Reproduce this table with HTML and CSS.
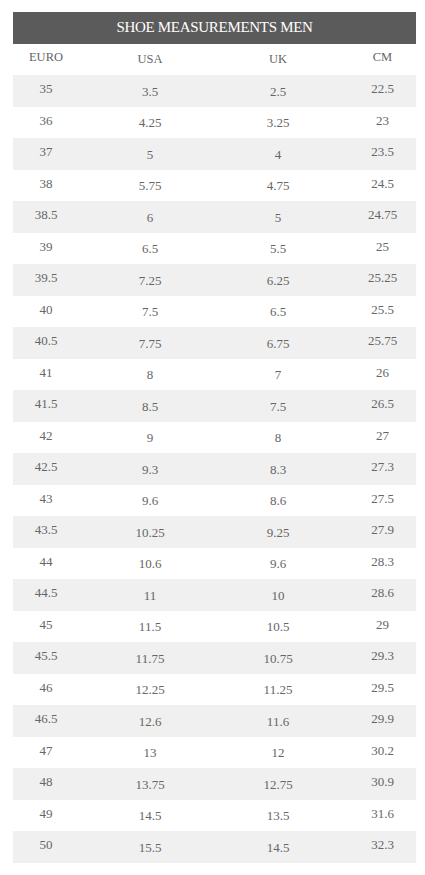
FILE: index.html
```html
<!DOCTYPE html>
<html>
<head>
<meta charset="utf-8">
<link rel="stylesheet" href="styles.css">
</head>
<body>
<div class="table">
  <div class="title">SHOE MEASUREMENTS MEN</div>
  <div class="row head"><span class="c1">EURO</span><span class="c2">USA</span><span class="c3">UK</span><span class="c4">CM</span></div>
  <div class="row alt"><span class="c1">35</span><span class="c2">3.5</span><span class="c3">2.5</span><span class="c4">22.5</span></div>
  <div class="row"><span class="c1">36</span><span class="c2">4.25</span><span class="c3">3.25</span><span class="c4">23</span></div>
  <div class="row alt"><span class="c1">37</span><span class="c2">5</span><span class="c3">4</span><span class="c4">23.5</span></div>
  <div class="row"><span class="c1">38</span><span class="c2">5.75</span><span class="c3">4.75</span><span class="c4">24.5</span></div>
  <div class="row alt"><span class="c1">38.5</span><span class="c2">6</span><span class="c3">5</span><span class="c4">24.75</span></div>
  <div class="row"><span class="c1">39</span><span class="c2">6.5</span><span class="c3">5.5</span><span class="c4">25</span></div>
  <div class="row alt"><span class="c1">39.5</span><span class="c2">7.25</span><span class="c3">6.25</span><span class="c4">25.25</span></div>
  <div class="row"><span class="c1">40</span><span class="c2">7.5</span><span class="c3">6.5</span><span class="c4">25.5</span></div>
  <div class="row alt"><span class="c1">40.5</span><span class="c2">7.75</span><span class="c3">6.75</span><span class="c4">25.75</span></div>
  <div class="row"><span class="c1">41</span><span class="c2">8</span><span class="c3">7</span><span class="c4">26</span></div>
  <div class="row alt"><span class="c1">41.5</span><span class="c2">8.5</span><span class="c3">7.5</span><span class="c4">26.5</span></div>
  <div class="row"><span class="c1">42</span><span class="c2">9</span><span class="c3">8</span><span class="c4">27</span></div>
  <div class="row alt"><span class="c1">42.5</span><span class="c2">9.3</span><span class="c3">8.3</span><span class="c4">27.3</span></div>
  <div class="row"><span class="c1">43</span><span class="c2">9.6</span><span class="c3">8.6</span><span class="c4">27.5</span></div>
  <div class="row alt"><span class="c1">43.5</span><span class="c2">10.25</span><span class="c3">9.25</span><span class="c4">27.9</span></div>
  <div class="row"><span class="c1">44</span><span class="c2">10.6</span><span class="c3">9.6</span><span class="c4">28.3</span></div>
  <div class="row alt"><span class="c1">44.5</span><span class="c2">11</span><span class="c3">10</span><span class="c4">28.6</span></div>
  <div class="row"><span class="c1">45</span><span class="c2">11.5</span><span class="c3">10.5</span><span class="c4">29</span></div>
  <div class="row alt"><span class="c1">45.5</span><span class="c2">11.75</span><span class="c3">10.75</span><span class="c4">29.3</span></div>
  <div class="row"><span class="c1">46</span><span class="c2">12.25</span><span class="c3">11.25</span><span class="c4">29.5</span></div>
  <div class="row alt"><span class="c1">46.5</span><span class="c2">12.6</span><span class="c3">11.6</span><span class="c4">29.9</span></div>
  <div class="row"><span class="c1">47</span><span class="c2">13</span><span class="c3">12</span><span class="c4">30.2</span></div>
  <div class="row alt"><span class="c1">48</span><span class="c2">13.75</span><span class="c3">12.75</span><span class="c4">30.9</span></div>
  <div class="row"><span class="c1">49</span><span class="c2">14.5</span><span class="c3">13.5</span><span class="c4">31.6</span></div>
  <div class="row alt"><span class="c1">50</span><span class="c2">15.5</span><span class="c3">14.5</span><span class="c4">32.3</span></div>
</div>
</body>
</html>
```

FILE: styles.css
```css
html, body {
  margin: 0;
  padding: 0;
  background: #ffffff;
}
body {
  padding: 12px 9px 0 13px;
  font-family: "Liberation Serif", "Times New Roman", serif;
}
.table {
  width: 403px;
  display: flex;
  flex-direction: column;
}
.title {
  height: 31.5px;
  background: #5b5b5b;
  color: #ffffff;
  font-size: 15px;
  letter-spacing: -0.3px;
  display: flex;
  align-items: center;
  justify-content: center;
}
.row {
  height: 31.5px;
  display: grid;
  grid-template-columns: 66px 142px 114px 81px;
  align-items: center;
  color: #666666;
  font-size: 13px;
  line-height: 15px;
}
.row.alt {
  background: #f0f0f0;
}
.row span {
  text-align: center;
}
.c1, .c4 {
  padding-bottom: 4px;
}
.c2, .c3 {
  padding-top: 1px;
}
.c4 {
  padding-left: 14px;
}
.head {
  font-size: 12.5px;
}
```
